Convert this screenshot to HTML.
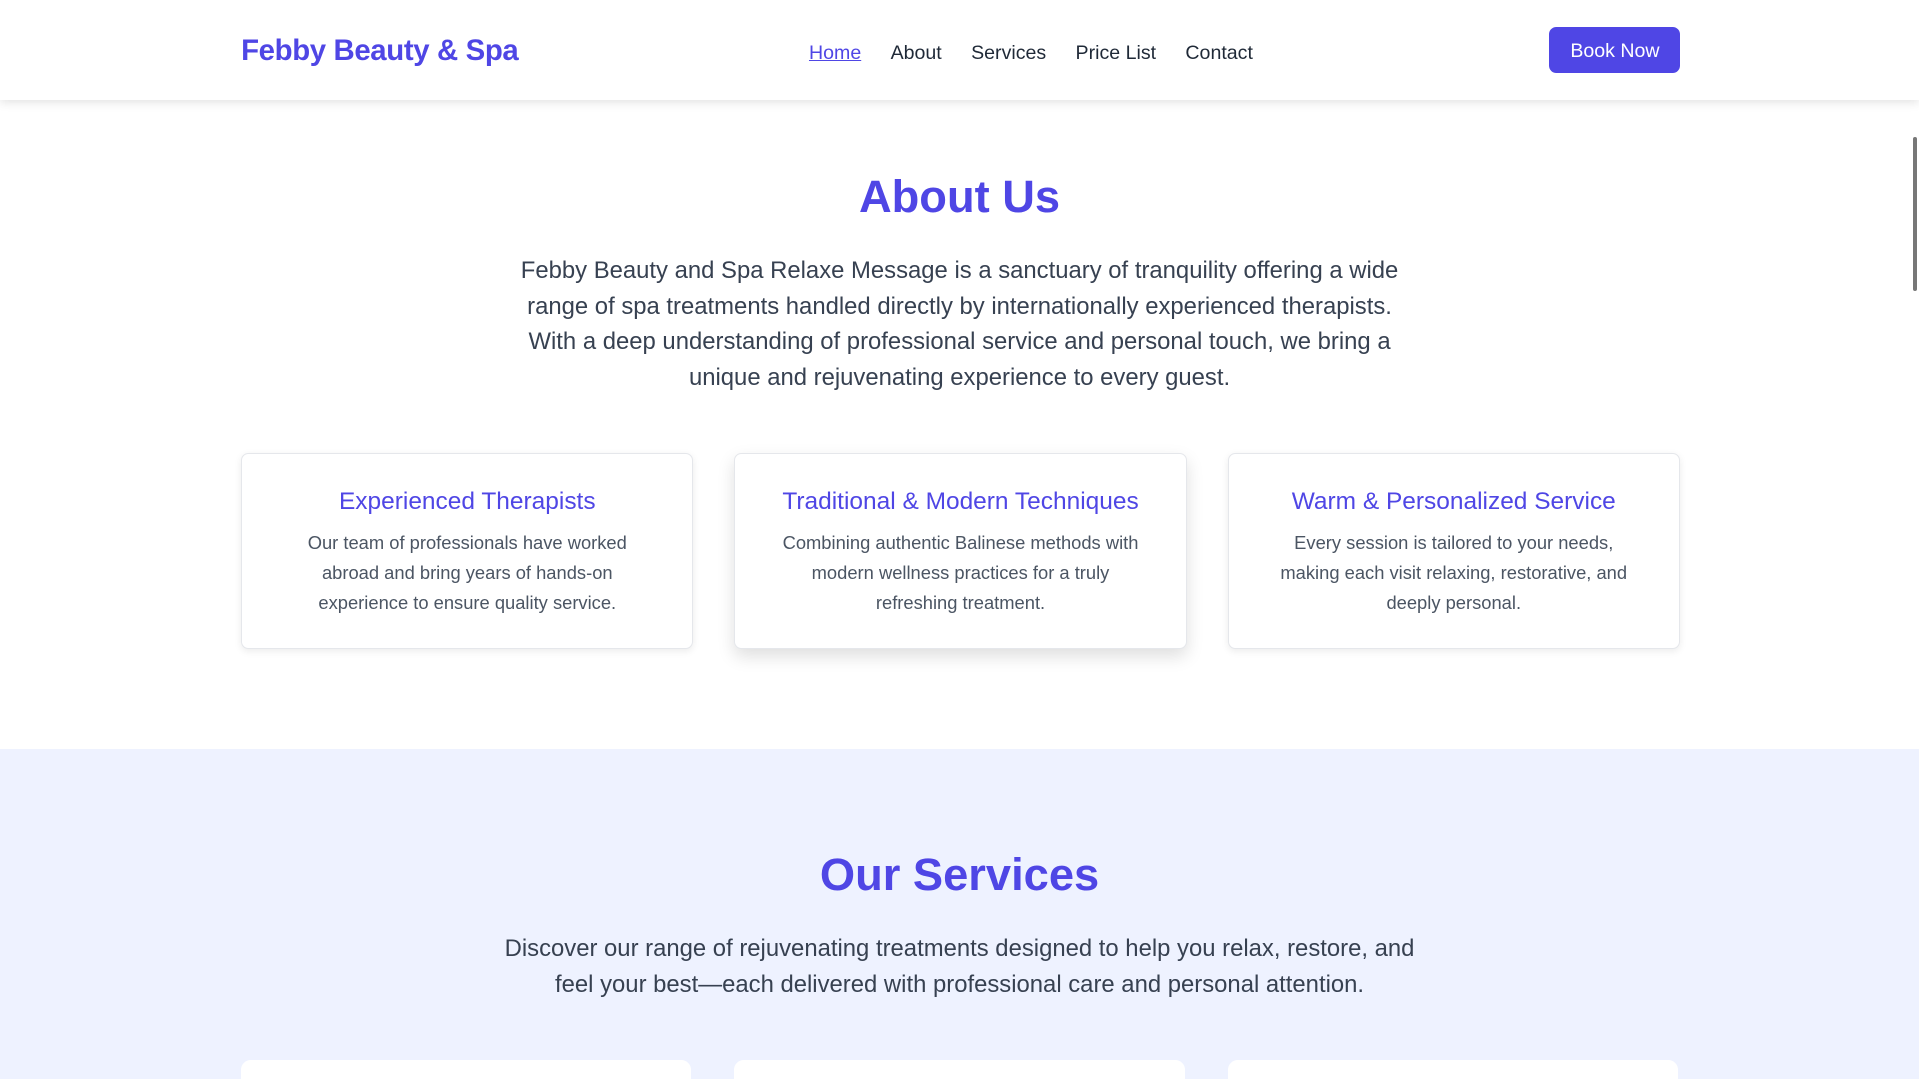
<!DOCTYPE html>
<html><head><meta charset="utf-8">
<style>
html,body{margin:0;padding:0;overflow:hidden;background:#fff;}
body{width:1919px;height:1079px;}
#w{zoom:1.2239;width:1568px;height:882px;position:relative;overflow:hidden;font-family:"Liberation Sans",sans-serif;color:#374151;}
header{position:absolute;left:0;top:0;width:1568px;height:82px;background:#fff;box-shadow:0 2px 8px rgba(0,0,0,0.12);z-index:2;}
.logo{position:absolute;left:197px;top:28px;font-size:24px;font-weight:bold;color:#4f46e5;letter-spacing:-0.3px;}
nav{position:absolute;left:661px;top:34px;font-size:16px;color:#1f2937;}
nav span{margin-right:24px;}
nav .a{color:#4f46e5;text-decoration:underline;}
.btn{position:absolute;left:1266px;top:22px;width:107px;height:38px;background:#4f46e5;border-radius:6px;color:#fff;font-size:16px;text-align:center;line-height:40px;}
h2{position:absolute;left:0;width:1568px;text-align:center;margin:0;font-size:37px;font-weight:bold;color:#4f46e5;}
.p{position:absolute;left:0;width:1568px;text-align:center;font-size:19.5px;line-height:29px;color:#374151;}
.card{position:absolute;width:368px;height:159px;background:#fff;border:1px solid #e5e7eb;border-radius:6px;box-shadow:0 2px 6px rgba(0,0,0,0.08);text-align:center;}
.card h3{margin:28px 0 10px;font-size:20px;font-weight:normal;color:#4f46e5;}
.card p{margin:0 auto;width:310px;font-size:15px;line-height:24.5px;color:#4b5563;}
.svc{position:absolute;left:0;top:612px;width:1568px;height:270px;background:#eef2ff;}
.sc{position:absolute;top:866px;width:368px;height:40px;background:#fff;border-radius:8px;}
.sb{position:absolute;right:2px;top:112px;width:3px;height:126px;background:#777;border-radius:2px;}
</style></head><body><div id="w">
<header>
<div class="logo">Febby Beauty &amp; Spa</div>
<nav><span class="a">Home</span><span>About</span><span>Services</span><span>Price List</span><span>Contact</span></nav>
<div class="btn">Book Now</div>
</header>
<div class="sb"></div>
<h2 style="top:140px">About Us</h2>
<div class="p" style="top:207px">Febby Beauty and Spa Relaxe Message is a sanctuary of tranquility offering a wide<br>range of spa treatments handled directly by internationally experienced therapists.<br>With a deep understanding of professional service and personal touch, we bring a<br>unique and rejuvenating experience to every guest.</div>
<div class="card" style="left:197px;top:370px"><h3>Experienced Therapists</h3><p>Our team of professionals have worked abroad and bring years of hands-on experience to ensure quality service.</p></div>
<div class="card" style="left:600px;top:370px;box-shadow:0 6px 14px rgba(0,0,0,0.13)"><h3>Traditional &amp; Modern Techniques</h3><p>Combining authentic Balinese methods with modern wellness practices for a truly refreshing treatment.</p></div>
<div class="card" style="left:1003px;top:370px"><h3>Warm &amp; Personalized Service</h3><p>Every session is tailored to your needs, making each visit relaxing, restorative, and deeply personal.</p></div>
<div class="svc"></div>
<h2 style="top:694px">Our Services</h2>
<div class="p" style="top:761px">Discover our range of rejuvenating treatments designed to help you relax, restore, and<br>feel your best—each delivered with professional care and personal attention.</div>
<div class="sc" style="left:197px"></div>
<div class="sc" style="left:600px"></div>
<div class="sc" style="left:1003px"></div>
</div></body></html>
